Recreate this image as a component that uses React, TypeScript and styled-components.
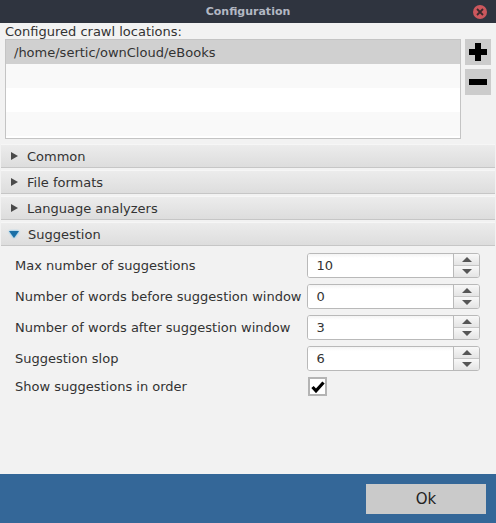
import styled, { createGlobalStyle } from "styled-components";

const GlobalStyle = createGlobalStyle`
  html, body {
    margin: 0;
    padding: 0;
  }
  body {
    font-family: "DejaVu Sans", "Liberation Sans", sans-serif;
    background: #f2f2f2;
  }
`;

type ExpandProps = { open?: boolean };
type RowProps = { shade: "selected" | "odd" | "even" };

const Window = styled.div`
  width: 496px;
  height: 523px;
  display: flex;
  flex-direction: column;
  background: #f2f2f2;
  overflow: hidden;
`;

const TitleBar = styled.div`
  height: 23px;
  flex-shrink: 0;
  background: #2f343f;
  display: flex;
  align-items: center;
  justify-content: center;
  position: relative;
`;

const Title = styled.span`
  color: #b3b8c3;
  font-size: 11px;
  font-weight: bold;
`;

const CloseButton = styled.div`
  position: absolute;
  right: 9px;
  top: 5px;
  width: 14px;
  height: 14px;
  border-radius: 50%;
  background: #cc575d;
  display: flex;
  align-items: center;
  justify-content: center;
`;

const Content = styled.div`
  padding: 2px 5px 0 5px;
`;

const Label = styled.div`
  font-size: 13px;
  color: #333;
  line-height: 14px;
`;

const LocationsRow = styled.div`
  display: flex;
  gap: 4px;
`;

const LocationList = styled.div`
  width: 457px;
  height: 100px;
  box-sizing: border-box;
  border: 1px solid #c4c4c4;
  background: #fff;
  display: flex;
  flex-direction: column;
`;

const ListRow = styled.div<RowProps>`
  height: 24px;
  flex-shrink: 0;
  display: flex;
  align-items: center;
  padding-left: 8px;
  font-size: 13px;
  color: #333;
  background: ${(p) =>
    p.shade === "selected" ? "#d0d0d0" : p.shade === "odd" ? "#f9f9f9" : "#fff"};
`;

const SideButtons = styled.div`
  display: flex;
  flex-direction: column;
  gap: 4px;
`;

const IconButton = styled.div`
  width: 26px;
  height: 26px;
  background: #cccccc;
  display: flex;
  align-items: center;
  justify-content: center;
`;

const Accordion = styled.div`
  margin: 5px 1px 0 1px;
  display: flex;
  flex-direction: column;
`;

const PaneHeader = styled.div`
  height: 24px;
  box-sizing: border-box;
  display: flex;
  align-items: center;
  gap: 9px;
  padding-left: 10px;
  background: linear-gradient(#ececec, #dddddd);
  border-bottom: 1px solid #c6c6c6;
  border-top: 1px solid #f6f6f6;
  margin-bottom: 2px;
  font-size: 13px;
  color: #333;
`;

const Arrow = styled.span<ExpandProps>`
  width: 0;
  height: 0;
  ${(p) =>
    p.open
      ? `border-left: 5px solid transparent;
         border-right: 5px solid transparent;
         border-top: 7px solid #1a6fa6;
         filter: drop-shadow(0 0 1px #4fb6ef);
         margin-left: -2px;`
      : `border-top: 4.5px solid transparent;
         border-bottom: 4.5px solid transparent;
         border-left: 7px solid #4a4a4a;`}
`;

const PaneBody = styled.div`
  padding: 5px 15px 0 14px;
  display: flex;
  flex-direction: column;
  gap: 6px;
`;

const FieldRow = styled.div<{ compact?: boolean }>`
  display: flex;
  align-items: center;
  height: ${(p) => (p.compact ? "19px" : "25px")};
  font-size: 13px;
  color: #333;
`;

const FieldLabel = styled.div`
  width: 293px;
  white-space: nowrap;
`;

const Spinner = styled.div`
  width: 173px;
  height: 25px;
  box-sizing: border-box;
  border: 1px solid #b9b9b9;
  border-radius: 3px;
  background: #fff;
  display: flex;
  overflow: hidden;
`;

const SpinnerValue = styled.div`
  flex: 1;
  display: flex;
  align-items: center;
  padding-left: 8px;
  background: linear-gradient(#f4f4f4, #fff 4px);
`;

const SpinnerArrows = styled.div`
  width: 25px;
  border-left: 1px solid #b9b9b9;
  display: flex;
  flex-direction: column;
`;

const SpinnerArrow = styled.div<ExpandProps>`
  flex: 1;
  display: flex;
  align-items: center;
  justify-content: center;
  background: linear-gradient(#f8f8f8, #e4e4e4);
  border-top: ${(p) => (p.open ? "1px solid #c6c6c6" : "none")};
`;

const Tri = styled.span<ExpandProps>`
  width: 0;
  height: 0;
  border-left: 5px solid transparent;
  border-right: 5px solid transparent;
  ${(p) => (p.open ? "border-top: 5px solid #555;" : "border-bottom: 5px solid #555;")}
`;

const CheckBox = styled.div`
  width: 19px;
  height: 19px;
  box-sizing: border-box;
  border: 2px solid #b4b4b4;
  background: #fff;
  display: flex;
  align-items: center;
  justify-content: center;
`;

const Spacer = styled.div`
  flex: 1;
`;

const Footer = styled.div`
  height: 49px;
  flex-shrink: 0;
  background: #346798;
  display: flex;
  align-items: center;
  justify-content: flex-end;
  padding-right: 10px;
`;

const OkButton = styled.div`
  width: 120px;
  height: 30px;
  background: #cacaca;
  display: flex;
  align-items: center;
  justify-content: center;
  font-size: 15px;
  color: #222;
`;

const fields = [
  { label: "Max number of suggestions", value: "10" },
  { label: "Number of words before suggestion window", value: "0" },
  { label: "Number of words after suggestion window", value: "3" },
  { label: "Suggestion slop", value: "6" },
];

const panes = ["Common", "File formats", "Language analyzers"];

const App = () => {
  return (
    <Window>
      <GlobalStyle />
      <TitleBar>
        <Title>Configuration</Title>
        <CloseButton>
          <svg width="8" height="8" viewBox="0 0 8 8">
            <path d="M1 1L7 7M7 1L1 7" stroke="#3a2a2e" strokeWidth="1.8" />
          </svg>
        </CloseButton>
      </TitleBar>
      <Content>
        <Label>Configured crawl locations:</Label>
        <LocationsRow>
          <LocationList>
            <ListRow shade="selected">/home/sertic/ownCloud/eBooks</ListRow>
            <ListRow shade="odd" />
            <ListRow shade="even" />
            <ListRow shade="odd" />
          </LocationList>
          <SideButtons>
            <IconButton>
              <svg width="18" height="18" viewBox="0 0 18 18">
                <path d="M6 0h6v6h6v6h-6v6h-6v-6h-6v-6h6z" fill="#000" />
              </svg>
            </IconButton>
            <IconButton>
              <svg width="18" height="6" viewBox="0 0 18 6">
                <rect width="18" height="6" fill="#000" />
              </svg>
            </IconButton>
          </SideButtons>
        </LocationsRow>
      </Content>
      <Accordion>
        {panes.map((p) => (
          <PaneHeader key={p}>
            <Arrow />
            {p}
          </PaneHeader>
        ))}
        <PaneHeader>
          <Arrow open />
          Suggestion
        </PaneHeader>
        <PaneBody>
          {fields.map((f) => (
            <FieldRow key={f.label}>
              <FieldLabel>{f.label}</FieldLabel>
              <Spinner>
                <SpinnerValue>{f.value}</SpinnerValue>
                <SpinnerArrows>
                  <SpinnerArrow>
                    <Tri />
                  </SpinnerArrow>
                  <SpinnerArrow open>
                    <Tri open />
                  </SpinnerArrow>
                </SpinnerArrows>
              </Spinner>
            </FieldRow>
          ))}
          <FieldRow compact>
            <FieldLabel>Show suggestions in order</FieldLabel>
            <CheckBox>
              <svg width="14" height="12" viewBox="0 0 14 12">
                <path d="M1.5 6L5 9.8L12.5 1.5" stroke="#000" strokeWidth="3.2" fill="none" />
              </svg>
            </CheckBox>
          </FieldRow>
        </PaneBody>
      </Accordion>
      <Spacer />
      <Footer>
        <OkButton>Ok</OkButton>
      </Footer>
    </Window>
  );
};

export default App;
